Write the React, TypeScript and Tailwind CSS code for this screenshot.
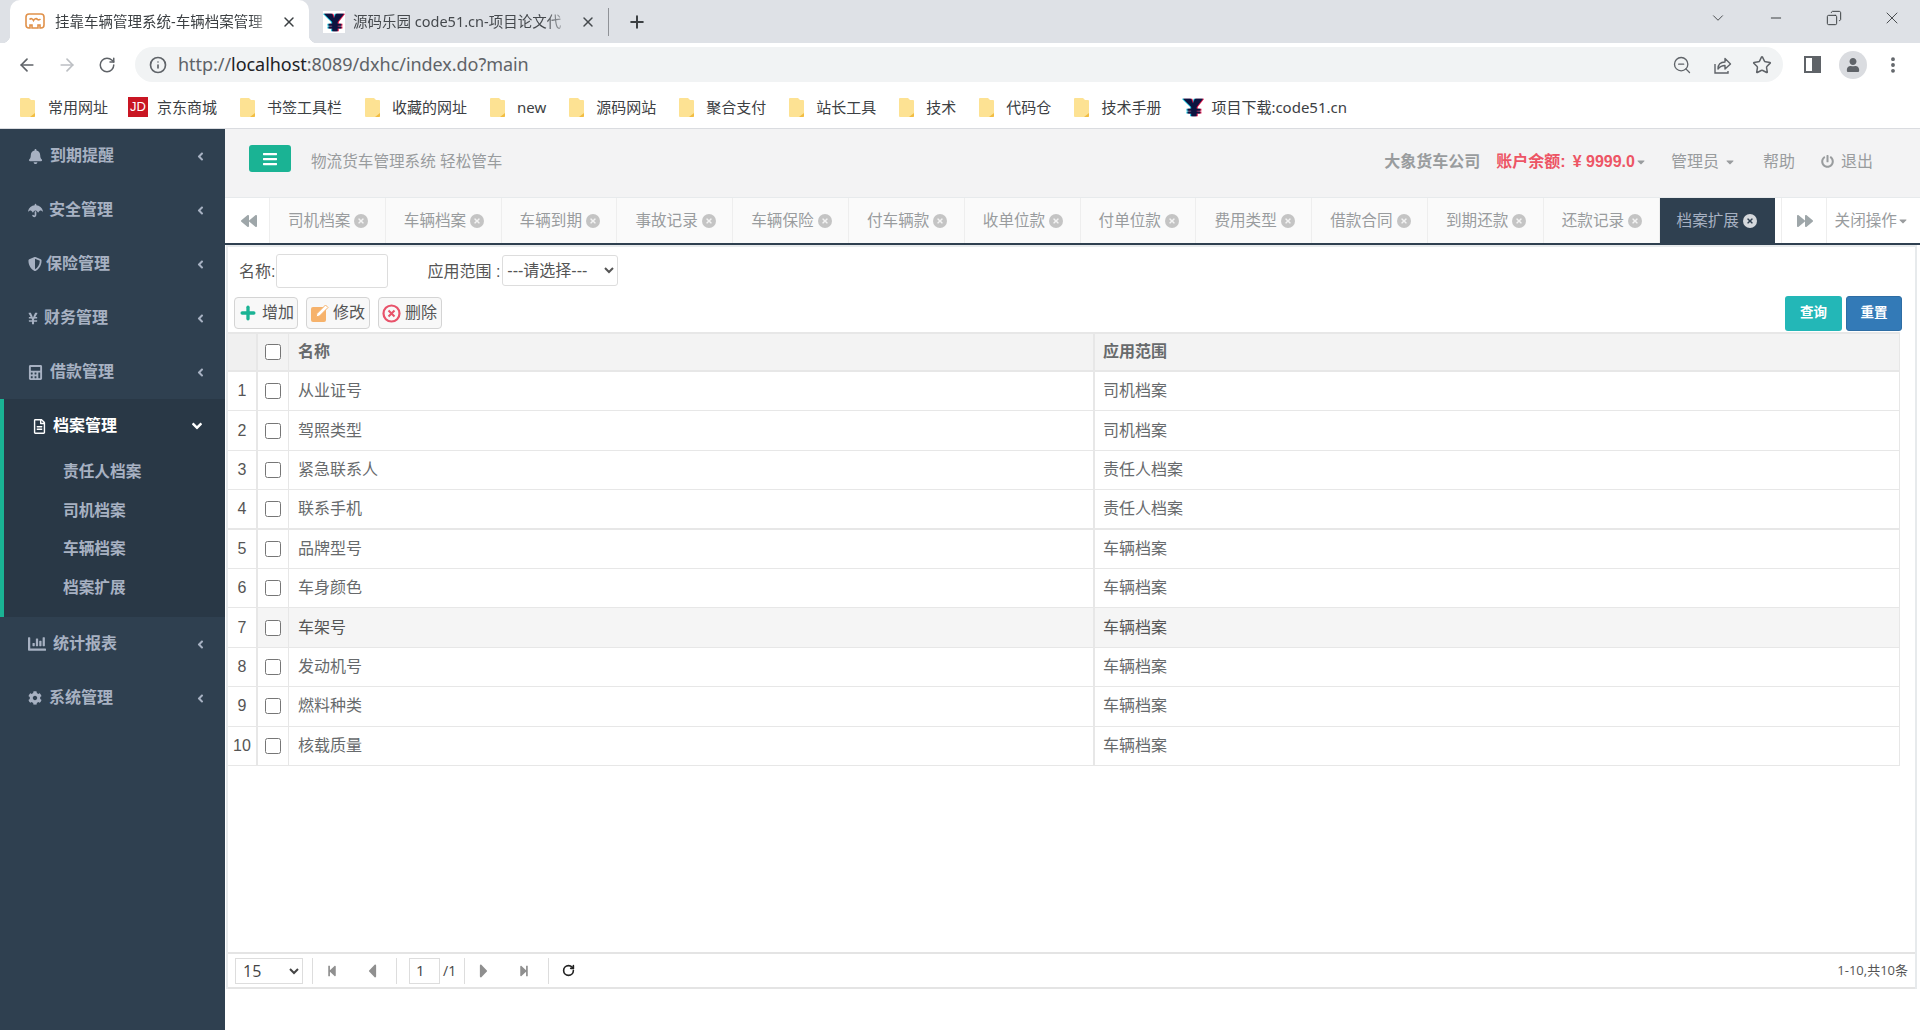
import {
  ArrowLeft,
  ArrowRight,
  ChevronDown,
  Copy,
  EllipsisVertical,
  Info,
  Minus,
  Plus,
  RotateCw,
  Star,
  X,
  ZoomOut,
} from 'lucide-react';
import type { ReactNode } from 'react';
import {
  FaAngleDown,
  FaAngleLeft,
  FaBackward,
  FaBars,
  FaBell,
  FaCalculator,
  FaCaretDown,
  FaCaretLeft,
  FaCaretRight,
  FaChartBar,
  FaCog,
  FaForward,
  FaPowerOff,
  FaRegFileAlt,
  FaShieldAlt,
  FaStepBackward,
  FaStepForward,
  FaTimes,
  FaUmbrella,
  FaUser,
  FaYenSign,
} from 'react-icons/fa';

const menusTop = [
  { label: '到期提醒', icon: <FaBell className="size-[15px]" />, textGap: 'ml-[7px]' },
  { label: '安全管理', icon: <FaUmbrella className="size-[15px]" />, textGap: 'ml-[6px]' },
  { label: '保险管理', icon: <FaShieldAlt className="size-[14px]" />, textGap: 'ml-[4px]' },
  { label: '财务管理', icon: <FaYenSign className="w-[10px] h-[15px]" />, textGap: 'ml-[6px]' },
  { label: '借款管理', icon: <FaCalculator className="size-[15px]" />, textGap: 'ml-[7px]' },
];

const menusBottom = [
  { label: '统计报表', icon: <FaChartBar className="size-[18px]" />, textGap: 'ml-[7px]' },
  { label: '系统管理', icon: <FaCog className="size-[14px]" />, textGap: 'ml-[7px]' },
];

const subMenus = ['责任人档案', '司机档案', '车辆档案', '档案扩展'];

const pageTabs = [
  '司机档案',
  '车辆档案',
  '车辆到期',
  '事故记录',
  '车辆保险',
  '付车辆款',
  '收单位款',
  '付单位款',
  '费用类型',
  '借款合同',
  '到期还款',
  '还款记录',
];

const bookmarks = ['书签工具栏', '收藏的网址', 'new', '源码网站', '聚合支付', '站长工具', '技术', '代码仓', '技术手册'];

const rows = [
  ['从业证号', '司机档案'],
  ['驾照类型', '司机档案'],
  ['紧急联系人', '责任人档案'],
  ['联系手机', '责任人档案'],
  ['品牌型号', '车辆档案'],
  ['车身颜色', '车辆档案'],
  ['车架号', '车辆档案'],
  ['发动机号', '车辆档案'],
  ['燃料种类', '车辆档案'],
  ['核载质量', '车辆档案'],
];

function Folder() {
  return (
    <svg width="15" height="19" viewBox="0 0 15 19" className="shrink-0">
      <path d="M1 0h8l2 2h3a1 1 0 0 1 1 1v15a1 1 0 0 1-1 1H1a1 1 0 0 1-1-1V1a1 1 0 0 1 1-1z" fill="#fde293" />
      <path d="M10 19l5-4v3a1 1 0 0 1-1 1z" fill="#f2bd42" />
    </svg>
  );
}

function YLogo() {
  const path = 'M1 3h9l2 5 2-5h9l-7 9v2h4v2h-4v1h4v2h-4v3H10v-3H6v-2h4v-1H6v-2h4v-2z';
  return (
    <svg width="22" height="22" viewBox="0 0 24 24" className="shrink-0">
      <rect width="24" height="24" fill="#fff" />
      <path d={path} fill="#19c6e0" transform="translate(-1.2 0)" />
      <path d={path} fill="#e8174b" transform="translate(1.2 0)" />
      <path d={path} fill="#0c1440" />
    </svg>
  );
}

function CloseDot({ active }: { active?: boolean }) {
  return (
    <span
      className={`grid place-items-center rounded-full size-[14px] shrink-0 ${active ? 'bg-[#d5d8dc] text-[#2f4050]' : 'bg-[#c4c4c4] text-[#f3f3f3]'}`}
    >
      <FaTimes className="size-[8px]" />
    </span>
  );
}

function BrowserChrome() {
  return (
    <div className='font-["Noto_Sans","Noto_Sans_CJK_SC",sans-serif] shrink-0'>
      <div className="flex bg-[#dee1e6] h-[43px]">
        <div className="relative flex items-center bg-white ml-[10px] pr-[12px] pl-[15px] rounded-t-[10px] w-[299px] text-[#3c4043]">
          <span className="-left-[8px] absolute bottom-0 bg-[radial-gradient(circle_at_0_0,transparent_8px,white_8.5px)] size-[8px]" />
          <span className="-right-[8px] absolute bottom-0 bg-[radial-gradient(circle_at_100%_0,transparent_8px,white_8.5px)] size-[8px]" />
          <svg width="20" height="17" viewBox="0 0 20 17" className="shrink-0" fill="none" stroke="#e0914a" strokeWidth="1.6">
            <path d="M4 1h12a3 3 0 0 1 3 3v8a3 3 0 0 1-3 3h-1v-3h-2v3H7v-3H5v3H4a3 3 0 0 1-3-3V4a3 3 0 0 1 3-3z" />
            <path d="M4.5 6.5c1.5-1.5 3-1 4 1 1-2 3-2.500 4-1 1 .5 2 .5 3-.5" />
          </svg>
          <span className="flex-1 ml-[10px] [mask-image:linear-gradient(to_right,black_90%,transparent)] overflow-hidden text-[14.5px] whitespace-nowrap">
            挂靠车辆管理系统-车辆档案管理
          </span>
          <X className="ml-[8px] size-[16px] shrink-0" strokeWidth={2.2} />
        </div>
        <div className="flex items-center pr-[12px] pl-[14px] w-[299px] text-[#45494d]">
          <YLogo />
          <span className="flex-1 ml-[8px] [mask-image:linear-gradient(to_right,black_88%,transparent)] text-[14.5px] whitespace-nowrap">
            源码乐园 code51.cn-项目论文代
          </span>
          <X className="ml-[8px] size-[16px] shrink-0" strokeWidth={2.2} />
        </div>
        <div className="self-center bg-[#8f9297] w-px h-[28px]" />
        <Plus className="self-center ml-[18px] size-[20px] text-[#3c4043]" strokeWidth={2.4} />
        <div className="flex ml-auto -mr-px h-[36px] text-[#3c4043]">
          <span className="place-content-center grid w-[58px]">
            <ChevronDown className="size-[18px]" strokeWidth={1.2} />
          </span>
          <span className="place-content-center grid w-[58px]">
            <Minus className="size-[16px]" strokeWidth={1.5} />
          </span>
          <span className="place-content-center grid w-[58px]">
            <Copy className="size-[16px] -scale-x-100" strokeWidth={1.5} />
          </span>
          <span className="place-content-center grid w-[58px]">
            <X className="size-[20px]" strokeWidth={1.1} />
          </span>
        </div>
      </div>
      <div className="flex items-center bg-white pl-[7px] h-[43px] text-[#5f6368]">
        <span className="place-content-center grid w-[40px]">
          <ArrowLeft className="size-[20px]" />
        </span>
        <span className="place-content-center grid w-[40px] text-[#bcbfc3]">
          <ArrowRight className="size-[20px]" />
        </span>
        <span className="place-content-center grid w-[40px]">
          <RotateCw className="size-[18px]" />
        </span>
        <div className="flex items-center bg-[#f1f3f4] ml-[8px] pr-[11px] pl-[14px] rounded-full w-[1648px] h-[35px]">
          <Info className="size-[18px]" strokeWidth={2.2} />
          <span className="ml-[11px] text-[18px] tracking-[-0.05px]">
            <span className="text-[#5f6368]">http://</span>
            <span className="text-[#202124]">localhost</span>
            <span className="text-[#5f6368]">:8089/dxhc/index.do?main</span>
          </span>
          <div className="flex items-center gap-[20px] ml-auto">
            <ZoomOut className="size-[20px]" strokeWidth={1.6} />
            <svg width="20" height="20" viewBox="0 0 20 20" fill="none" stroke="currentColor" strokeWidth="1.4">
              <path d="M3 9v9h13v-2" />
              <path d="M6 14c0-5 3-7 7-7V3.500l5.500 5.500-5.500 5v-3.500c-3 0-5 1-7 3.500z" strokeLinejoin="round" />
            </svg>
            <Star className="size-[20px]" strokeWidth={1.8} />
          </div>
        </div>
        <span className="place-content-center grid ml-[9px] w-[40px]">
          <svg width="17" height="17" viewBox="0 0 17 17">
            <path d="M0 0h17v17H0z" fill="#5f6368" />
            <path d="M2 2h6v13H2z" fill="#fff" />
          </svg>
        </span>
        <span className="place-content-center grid w-[41px]">
          <span className="place-content-center grid bg-[#dadce0] rounded-full size-[28px]">
            <FaUser className="size-[14px]" />
          </span>
        </span>
        <span className="place-content-center grid w-[40px]">
          <EllipsisVertical className="size-[20px]" strokeWidth={2.6} />
        </span>
      </div>
      <div className="flex items-center gap-[23px] bg-white pl-[20px] border-[#dadce0] border-b h-[43px] text-[#3c4043] text-[15px]">
        <span className="flex items-center gap-[13px] -mr-[3px]">
          <Folder />
          常用网址
        </span>
        <span className="flex items-center gap-[9px]">
          <span className="place-content-center grid bg-[#c91623] w-[20px] h-[20px] font-['Liberation_Sans'] text-[13px] text-white">JD</span>
          京东商城
        </span>
        {bookmarks.map(b => (
          <span key={b} className="flex items-center gap-[12px]">
            <Folder />
            {b}
          </span>
        ))}
        <span className="flex items-center gap-[7px] -ml-[2px]">
          <YLogo />
          项目下载:code51.cn
        </span>
      </div>
    </div>
  );
}

function SideItem({ label, icon, textGap }: { label: string; icon: ReactNode; textGap: string }) {
  return (
    <div className="flex items-center pr-[18px] pl-[28px] h-[54px] text-[#a7b1c2]">
      {icon}
      <span className={textGap}>{label}</span>
      <FaAngleLeft className="ml-auto size-[13px]" />
    </div>
  );
}

function Sidebar() {
  return (
    <aside className="bg-[#2f4050] w-[225px] font-semibold text-[16px] shrink-0">
      {menusTop.map(m => (
        <SideItem key={m.label} {...m} />
      ))}
      <div className="bg-[#293846] border-[#1ab394] border-l-4 h-[218px]">
        <div className="flex items-center pr-[20px] pl-[28px] h-[54px] text-white">
          <FaRegFileAlt className="size-[15px]" />
          <span className="ml-[6px]">档案管理</span>
          <FaAngleDown className="ml-auto size-[16px]" />
        </div>
        <div className="pl-[59px]">
          {subMenus.map(s => (
            <div key={s} className="flex items-center h-[38.5px] text-[#a7b1c2] text-[15.7px]">
              {s}
            </div>
          ))}
        </div>
      </div>
      {menusBottom.map(m => (
        <SideItem key={m.label} {...m} />
      ))}
    </aside>
  );
}

function TopBar() {
  return (
    <div className="flex items-center bg-[#f3f3f4] pr-[47px] pb-[3px] pl-[24px] border-[#e7eaec] border-b h-[69px] text-[#999c9e] text-[16px] shrink-0">
      <span className="place-content-center grid bg-[#1ab394] mb-[6px] rounded-[3px] w-[42px] h-[27px] text-white">
        <FaBars className="size-[16px]" />
      </span>
      <span className="ml-[20px] text-[15.6px]">物流货车管理系统 轻松管车</span>
      <div className="flex items-center ml-auto font-semibold">
        <span>大象货车公司</span>
        <span className="flex items-center ml-[16px] text-[#ed5565]">
          账户余额:
          <span className="ml-[7px]">¥ 9999.0</span>
          <FaCaretDown className="size-[12px] text-[#999c9e]" />
        </span>
        <span className="flex items-center ml-[24px] font-normal">
          管理员
          <FaCaretDown className="ml-[5px] size-[12px]" />
        </span>
        <span className="ml-[27px] font-normal">帮助</span>
        <span className="flex items-center ml-[26px] font-normal">
          <FaPowerOff className="mr-[7px] size-[13px]" />
          退出
        </span>
      </div>
    </div>
  );
}

function PageTabs() {
  return (
    <div className="flex bg-white border-[#2f4050] border-b-2 h-[47px] text-[#999c9e] text-[15.6px] shrink-0">
      <span className="place-content-center grid ml-px border-[#eeeeee] border-r w-[44px]">
        <FaBackward className="ml-[2px] size-[16px] text-[#9ea6a9]" />
      </span>
      {pageTabs.map(t => (
        <div
          key={t}
          className="flex items-center gap-[4px] bg-[#fafafa] pl-[18px] border-[#eeeeee] border-r w-[115.8px] shrink-0"
        >
          {t}
          <CloseDot />
        </div>
      ))}
      <div className="flex items-center gap-[4px] bg-[#2f4050] pl-[17px] w-[115px] text-[#a7b1c2] shrink-0">
        档案扩展
        <CloseDot active />
      </div>
      <span className="border-[#eeeeee] border-r w-[7px]" />
      <span className="place-content-center grid border-[#eeeeee] border-r w-[45px]">
        <FaForward className="ml-[2px] size-[16px] text-[#9ea6a9]" />
      </span>
      <span className="flex items-center pl-[8px]">
        关闭操作
        <FaCaretDown className="size-[12px]" />
      </span>
    </div>
  );
}

function Table() {
  return (
    <div className="flex-1 w-[1672px] text-[#676a6c] text-[16px]">
      <div className="flex border-[#e7e7e7] border-y-2 h-[40px] font-bold">
        <span className="bg-[#f0f0f0] border-[#e7e7e7] border-r-2 w-[30px]" />
        <span className="place-content-center grid bg-[#f3f3f3] border-[#e7e7e7] border-r w-[31px]">
          <input type="checkbox" className="size-4" />
        </span>
        <span className="flex items-center bg-[#f3f3f3] pl-[9px] border-[#e7e7e7] border-r-2 w-[806px]">名称</span>
        <span className="flex flex-1 items-center bg-[#f3f3f3] pl-[8px] border-[#e7e7e7] border-r">应用范围</span>
      </div>
      {rows.map((r, i) => (
        <div
          key={r[0]}
          className={`flex h-[39.4px] border-[#e7e7e7] border-r ${i === 3 ? 'border-b-2' : 'border-b'}`}
        >
          <span className="place-content-center grid border-[#e7e7e7] border-r-2 w-[30px] text-[#555555]">{i + 1}</span>
          <span className={`place-content-center grid border-[#e7e7e7] border-r w-[31px] ${i === 6 ? 'bg-[#f5f5f5]' : ''}`}>
            <input type="checkbox" className="size-4" />
          </span>
          <span className={`flex items-center pl-[9px] border-[#e7e7e7] border-r-2 w-[806px] ${i === 6 ? 'bg-[#f5f5f5] text-[#555555]' : ''}`}>
            {r[0]}
          </span>
          <span className={`flex flex-1 items-center pl-[8px] ${i === 6 ? 'bg-[#f5f5f5] text-[#555555]' : ''}`}>{r[1]}</span>
        </div>
      ))}
    </div>
  );
}

function Pager() {
  return (
    <div className='flex items-center pr-[7px] pl-[7px] border-[#e4e4e4] border-t-2 border-b-2 h-[37px] font-["Open_Sans","Noto_Sans_CJK_SC",sans-serif] text-[#444444] text-[15px] shrink-0'>
      <select className="bg-white pl-[3px] border border-[#dddddd] w-[68px] h-[26px] text-[16px]">
        <option>15</option>
      </select>
      <span className="bg-[#dddddd] ml-[9px] w-px h-[26px]" />
      <span className="place-content-center grid w-[37px] text-[#8f8f8f]">
        <FaStepBackward className="size-[12px]" />
      </span>
      <span className="place-content-center grid w-[43px] text-[#8f8f8f]">
        <FaCaretLeft className="size-[22px]" />
      </span>
      <span className="bg-[#dddddd] ml-[3px] w-px h-[26px]" />
      <span className="flex items-center ml-[12px] pl-[6px] border border-[#dddddd] w-[31px] h-[26px]">1</span>
      <span className="ml-[3px] w-[20px] text-[14px]">/1</span>
      <span className="bg-[#dddddd] ml-px w-px h-[26px]" />
      <span className="place-content-center grid w-[37px] text-[#8f8f8f]">
        <FaCaretRight className="size-[22px]" />
      </span>
      <span className="place-content-center grid w-[43px] text-[#8f8f8f]">
        <FaStepForward className="size-[12px]" />
      </span>
      <span className="bg-[#dddddd] ml-[3px] w-px h-[26px]" />
      <RotateCw className="ml-[13px] size-[13px] text-[#222222]" strokeWidth={3} />
      <span className="ml-auto text-[#555555] text-[13px]">1-10,共10条</span>
    </div>
  );
}

function ToolButton({ icon, label, className }: { icon: ReactNode; label: string; className?: string }) {
  return (
    <button className={`flex items-center gap-[4px] bg-[#f8f8f8] pl-[3px] border border-[#d4d4d4] rounded-[4px] w-[64px] h-[32px] ${className ?? ''}`}>
      {icon}
      {label}
    </button>
  );
}

function Panel() {
  return (
    <div className="flex flex-col flex-1 border-[#e7eaec] border-x-2 border-t-2 ml-px mr-[3px] min-h-0 text-[#555555]">
      <div className="flex items-center pt-[2px] pl-[11px] h-[45px] text-[16px] shrink-0">
        <span className="pt-[2px]">名称:</span>
        <input className="bg-white ml-px border border-[#dddddd] rounded-[3px] w-[112px] h-[34px]" />
        <span className="ml-[39px] pt-[2px]">应用范围 :</span>
        <select className="bg-white ml-[2px] border border-[#dddddd] rounded-[3px] w-[116px] h-[31px] text-[16px]">
          <option>---请选择---</option>
        </select>
      </div>
      <div className="flex items-start pt-[5px] pr-[13px] pl-[6px] h-[40px] text-[16px] shrink-0">
        <ToolButton label="增加" icon={<Plus className="size-[20px] text-[#1ab394]" strokeWidth={4} />} />
        <ToolButton
          label="修改"
          className="ml-[8px]"
          icon={
            <svg width="19" height="19" viewBox="0 0 19 19" className="shrink-0">
              <rect x="1" y="3" width="15" height="15" rx="2" fill="#f6b26b" />
              <path d="M6 13l1-3.500L15.500 1l2.500 2.500L9.500 12z" fill="#fff" stroke="#f6b26b" strokeWidth="1" />
            </svg>
          }
        />
        <ToolButton
          label="删除"
          className="ml-[8px]"
          icon={
            <svg width="19" height="19" viewBox="0 0 19 19" fill="none" stroke="#e8526a" className="shrink-0">
              <circle cx="9.500" cy="9.500" r="8" strokeWidth="2.200" />
              <path d="M6.500 6.500l6 6M12.500 6.500l-6 6" strokeWidth="2" />
            </svg>
          }
        />
        <button className="bg-[#23b7b7] -mt-px ml-auto rounded-[3px] w-[57px] h-[35px] font-bold text-[13.5px] text-white">查询</button>
        <button className="bg-[#337ab7] -mt-px ml-[4px] border border-[#2e6da4] rounded-[3px] w-[56px] h-[35px] font-bold text-[13.5px] text-white">
          重置
        </button>
      </div>
      <Table />
      <Pager />
    </div>
  );
}

export default function App() {
  return (
    <div className='flex flex-col bg-white w-[1920px] h-[1030px] overflow-hidden font-["Liberation_Sans","Noto_Sans_CJK_SC",sans-serif]'>
      <BrowserChrome />
      <div className="flex flex-1 min-h-0">
        <Sidebar />
        <main className="flex flex-col flex-1 pb-[41px] min-w-0">
          <TopBar />
          <PageTabs />
          <Panel />
        </main>
      </div>
    </div>
  );
}
